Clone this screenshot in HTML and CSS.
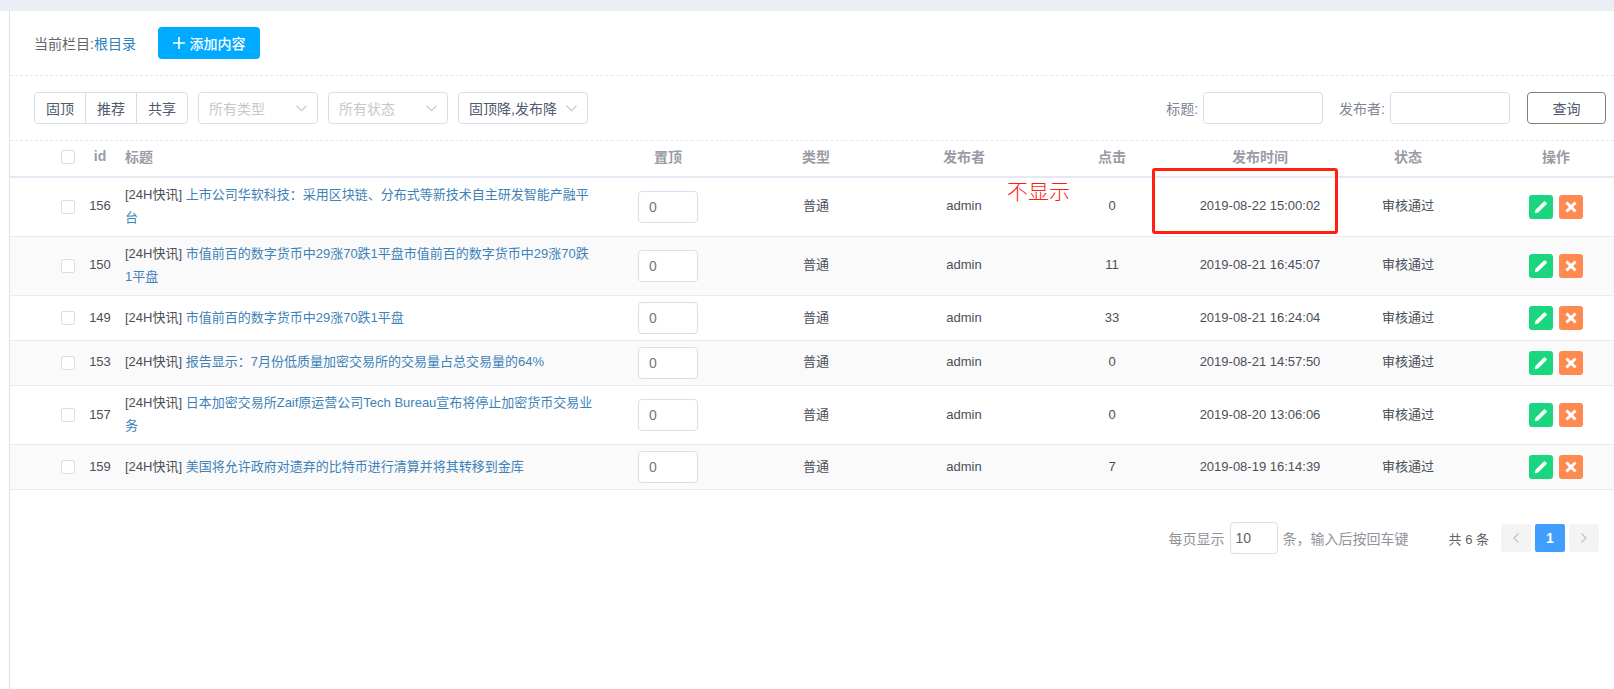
FILE: index.html
```html
<!DOCTYPE html>
<html lang="zh-CN">
<head>
<meta charset="utf-8">
<title>内容管理</title>
<link rel="stylesheet" href="styles.css">
</head>
<body>
<div class="topband"></div>
<div class="layout">
  <aside class="sidebar"></aside>
  <main class="main">
    <section class="bar bar-top">
      <span class="crumb">当前栏目:<a class="crumb-link">根目录</a></span>
      <button class="add-btn"><svg class="plus" viewBox="0 0 14 14"><path d="M7 1v12M1 7h12"/></svg>添加内容</button>
    </section>
    <section class="bar bar-filter">
      <div class="group">
        <button class="group-btn">固顶</button><button class="group-btn">推荐</button><button class="group-btn">共享</button>
      </div>
      <div class="select"><span class="ph">所有类型</span><svg class="chev" viewBox="0 0 10 6"><path d="M.5.5 5 5 9.5.5"/></svg></div>
      <div class="select"><span class="ph">所有状态</span><svg class="chev" viewBox="0 0 10 6"><path d="M.5.5 5 5 9.5.5"/></svg></div>
      <div class="select select-sort"><span>固顶降,发布降</span><svg class="chev" viewBox="0 0 10 6"><path d="M.5.5 5 5 9.5.5"/></svg></div>
      <div class="search">
        <label class="lbl">标题:</label><input class="field" type="text">
        <label class="lbl lbl-2">发布者:</label><input class="field" type="text">
        <button class="query">查询</button>
      </div>
    </section>
    <table class="grid">
      <colgroup>
        <col class="c-check"><col class="c-id"><col class="c-title">
        <col class="c-n"><col class="c-n"><col class="c-n"><col class="c-n"><col class="c-n"><col class="c-n"><col>
      </colgroup>
      <thead>
        <tr>
          <th class="cell-check"><span class="check"></span></th><th>id</th><th class="cell-title">标题</th>
          <th>置顶</th><th>类型</th><th>发布者</th><th>点击</th><th>发布时间</th><th>状态</th><th class="cell-ops">操作</th>
        </tr>
      </thead>
      <tbody>
        <tr class="tall">
          <td class="cell-check"><span class="check"></span></td><td>156</td>
          <td class="cell-title">[24H快讯] <a class="link">上市公司华软科技：采用区块链、分布式等新技术自主研发智能产融平台</a></td>
          <td class="cell-order"><input class="order" type="text" value="0"></td><td>普通</td><td>admin</td><td>0</td><td>2019-08-22 15:00:02</td><td>审核通过</td>
          <td class="cell-ops"><div class="ops"><button class="op op-edit"><svg viewBox="0 0 14 14"><path d="M1.5 12.500l.7-3L9.400 2.300a1 1 0 0 1 1.400 0l1 1a1 1 0 0 1 0 1.400L4.500 11.900z"/></svg></button><button class="op op-del"><svg viewBox="0 0 14 14"><path d="M3 3l8 8M11 3l-8 8"/></svg></button></div></td>
        </tr>
        <tr class="tall">
          <td class="cell-check"><span class="check"></span></td><td>150</td>
          <td class="cell-title">[24H快讯] <a class="link">市值前百的数字货币中29涨70跌1平盘市值前百的数字货币中29涨70跌1平盘</a></td>
          <td class="cell-order"><input class="order" type="text" value="0"></td><td>普通</td><td>admin</td><td>11</td><td>2019-08-21 16:45:07</td><td>审核通过</td>
          <td class="cell-ops"><div class="ops"><button class="op op-edit"><svg viewBox="0 0 14 14"><path d="M1.5 12.500l.7-3L9.400 2.300a1 1 0 0 1 1.400 0l1 1a1 1 0 0 1 0 1.400L4.500 11.900z"/></svg></button><button class="op op-del"><svg viewBox="0 0 14 14"><path d="M3 3l8 8M11 3l-8 8"/></svg></button></div></td>
        </tr>
        <tr class="short">
          <td class="cell-check"><span class="check"></span></td><td>149</td>
          <td class="cell-title">[24H快讯] <a class="link">市值前百的数字货币中29涨70跌1平盘</a></td>
          <td class="cell-order"><input class="order" type="text" value="0"></td><td>普通</td><td>admin</td><td>33</td><td>2019-08-21 16:24:04</td><td>审核通过</td>
          <td class="cell-ops"><div class="ops"><button class="op op-edit"><svg viewBox="0 0 14 14"><path d="M1.5 12.500l.7-3L9.400 2.300a1 1 0 0 1 1.400 0l1 1a1 1 0 0 1 0 1.400L4.500 11.900z"/></svg></button><button class="op op-del"><svg viewBox="0 0 14 14"><path d="M3 3l8 8M11 3l-8 8"/></svg></button></div></td>
        </tr>
        <tr class="short">
          <td class="cell-check"><span class="check"></span></td><td>153</td>
          <td class="cell-title">[24H快讯] <a class="link">报告显示：7月份低质量加密交易所的交易量占总交易量的64%</a></td>
          <td class="cell-order"><input class="order" type="text" value="0"></td><td>普通</td><td>admin</td><td>0</td><td>2019-08-21 14:57:50</td><td>审核通过</td>
          <td class="cell-ops"><div class="ops"><button class="op op-edit"><svg viewBox="0 0 14 14"><path d="M1.5 12.500l.7-3L9.400 2.300a1 1 0 0 1 1.400 0l1 1a1 1 0 0 1 0 1.400L4.500 11.900z"/></svg></button><button class="op op-del"><svg viewBox="0 0 14 14"><path d="M3 3l8 8M11 3l-8 8"/></svg></button></div></td>
        </tr>
        <tr class="tall">
          <td class="cell-check"><span class="check"></span></td><td>157</td>
          <td class="cell-title">[24H快讯] <a class="link">日本加密交易所Zaif原运营公司Tech Bureau宣布将停止加密货币交易业务</a></td>
          <td class="cell-order"><input class="order" type="text" value="0"></td><td>普通</td><td>admin</td><td>0</td><td>2019-08-20 13:06:06</td><td>审核通过</td>
          <td class="cell-ops"><div class="ops"><button class="op op-edit"><svg viewBox="0 0 14 14"><path d="M1.5 12.500l.7-3L9.400 2.300a1 1 0 0 1 1.400 0l1 1a1 1 0 0 1 0 1.400L4.500 11.900z"/></svg></button><button class="op op-del"><svg viewBox="0 0 14 14"><path d="M3 3l8 8M11 3l-8 8"/></svg></button></div></td>
        </tr>
        <tr class="short">
          <td class="cell-check"><span class="check"></span></td><td>159</td>
          <td class="cell-title">[24H快讯] <a class="link">美国将允许政府对遗弃的比特币进行清算并将其转移到金库</a></td>
          <td class="cell-order"><input class="order" type="text" value="0"></td><td>普通</td><td>admin</td><td>7</td><td>2019-08-19 16:14:39</td><td>审核通过</td>
          <td class="cell-ops"><div class="ops"><button class="op op-edit"><svg viewBox="0 0 14 14"><path d="M1.5 12.500l.7-3L9.400 2.300a1 1 0 0 1 1.400 0l1 1a1 1 0 0 1 0 1.400L4.500 11.900z"/></svg></button><button class="op op-del"><svg viewBox="0 0 14 14"><path d="M3 3l8 8M11 3l-8 8"/></svg></button></div></td>
        </tr>
      </tbody>
    </table>
    <nav class="pager">
      <span class="pg-text">每页显示</span>
      <input class="pg-size" type="text" value="10">
      <span class="pg-text">条，输入后按回车键</span>
      <span class="pg-total">共 6 条</span>
      <button class="pg-btn"><svg viewBox="0 0 8 12"><path d="M6.500 1.500 2 6l4.500 4.500"/></svg></button>
      <button class="pg-btn pg-active">1</button>
      <button class="pg-btn"><svg viewBox="0 0 8 12"><path d="M1.500 1.500 6 6l-4.500 4.500"/></svg></button>
    </nav>
    <div class="note-box"></div>
    <div class="note-text">不显示</div>
  </main>
</div>
</body>
</html>
```
FILE: styles.css
```css
* { box-sizing: border-box; }
html, body { margin: 0; padding: 0; height: 100%; background: #fff; overflow: hidden; }
body { font-family: "Liberation Sans", "Noto Sans CJK SC", sans-serif; font-size: 13px; color: #515a6e; }
button, input { font-family: inherit; }

.topband { height: 11px; background: #ebeef4; }
.layout { display: flex; height: 678px; }
.sidebar { width: 10px; flex: none; border-right: 1px solid #dbe1e8; }
.main { flex: 1; position: relative; min-width: 0; }

.bar { display: flex; align-items: center; padding: 16px 8px 16px 24px; border-bottom: 1px dashed #e6e8ee; }
.bar-top { height: 65px; }
.bar-filter { height: 65px; }

.crumb { font-size: 14px; color: #666; }
.crumb-link { color: #2d7fbd; }
.add-btn {
  display: flex; align-items: center; justify-content: center;
  margin-left: 22px; width: 102px; height: 32px; padding: 0;
  background: #00aaff; border: 0; border-radius: 4px;
  color: #fff; font-size: 14px; font-weight: 500;
}
.plus { width: 14px; height: 14px; margin-right: 3px; fill: none; stroke: #fff; stroke-width: 1.6; }

.group { display: flex; width: 154px; height: 32px; border: 1px solid #dcdee6; border-radius: 4px; }
.group-btn {
  flex: 1; padding: 0; background: #fff; border: 0; border-right: 1px solid #dcdee6;
  color: #515a6e; font-size: 14px; border-radius: 4px 0 0 4px;
}
.group-btn:last-child { border-right: 0; border-radius: 0 4px 4px 0; }
.group-btn:nth-child(2) { border-radius: 0; }

.select {
  display: flex; align-items: center; justify-content: space-between;
  width: 120px; height: 32px; margin-left: 10px; padding: 0 10px 0 10px;
  border: 1px solid #dcdee6; border-radius: 4px; font-size: 14px; color: #515a6e; background: #fff;
}
.select-sort { width: 130px; padding-right: 10px; }
.ph { color: #c5c8ce; }
.chev { width: 11px; height: 7px; fill: none; stroke: #c5c8ce; stroke-width: 1; }

.search { display: flex; align-items: center; margin-left: auto; }
.lbl { font-size: 14px; color: #808695; margin-right: 5px; }
.lbl-2 { margin-left: 16px; }
.field { width: 120px; height: 32px; border: 1px solid #dcdee6; border-radius: 4px; background: #fff; outline: 0; }
.query {
  width: 79px; height: 32px; margin-left: 17px; padding: 0;
  background: #fff; border: 1px solid #808080; border-radius: 4px; color: #515a6e; font-size: 14px;
}

.grid { width: 1604px; table-layout: fixed; border-collapse: collapse; }
.c-check { width: 71px; }
.c-id { width: 38px; }
.c-title { width: 475px; }
.c-n { width: 148px; }
.grid th {
  height: 36px; padding: 0 0 5px; font-size: 14px; font-weight: 700; color: #9a9ca5; text-align: center;
  border-bottom: 2px solid #e6e8f3;
}
.grid td {
  padding: 0 0 2px; text-align: center; font-size: 13px; color: #4a4f5a; line-height: 23px;
  border-bottom: 1px solid #e9ebf1;
}
.grid tbody tr:nth-child(even) { background: #fafafa; }
.tall { height: 59.3px; }
.short { height: 44.9px; }
.grid .cell-check { padding: 0 0 0 51px; text-align: left; }
.grid .cell-title { padding-left: 6px; text-align: left; }
.grid .cell-order { padding-bottom: 0; }
.grid .cell-ops { padding: 0 0 0 16px; }
.grid thead .cell-ops { padding-bottom: 5px; }
.grid thead .cell-check { padding-bottom: 4px; }
.check {
  display: block; width: 14px; height: 14px; background: #fff;
  border: 1px solid #dcdee2; border-radius: 2px;
}
.link { color: #3d82b8; }
.order {
  display: block; width: 60px; height: 32px; margin: 0 auto; padding: 0 10px;
  border: 1px solid #dcdee6; border-radius: 4px; background: #fff; outline: 0;
  color: #777; font-size: 14px;
}
.ops { display: flex; justify-content: center; gap: 6px; }
.op {
  display: flex; align-items: center; justify-content: center;
  width: 24px; height: 24px; padding: 0; border: 0; border-radius: 3px;
}
.op svg { width: 16px; height: 16px; }
.op-edit { background: #19d67f; }
.op-edit svg { fill: #fff; }
.op-del { background: #ff8a50; }
.op-del svg { fill: none; stroke: #fff; stroke-width: 2.6; }

.pager { display: flex; align-items: center; height: 32px; margin-top: 32px; padding-right: 15px; justify-content: flex-end; }
.pg-text { font-size: 14px; color: #909399; }
.pg-size {
  width: 48px; height: 32px; margin: 0 5px; padding: 0 5px;
  border: 1px solid #dcdfe6; border-radius: 4px; background: #fff; outline: 0; color: #606266; font-size: 14px;
}
.pg-total { margin: 0 12px 0 40px; font-size: 13px; color: #606266; }
.pg-btn {
  display: flex; align-items: center; justify-content: center;
  width: 30px; height: 28px; margin-left: 4px; padding: 0;
  background: #f4f4f5; border: 0; border-radius: 2px; color: #fff; font-size: 14px; font-weight: 700;
}
.pg-btn:nth-of-type(1) { margin-left: 0; }
.pg-btn svg { width: 8px; height: 12px; fill: none; stroke: #c0c4cc; stroke-width: 1.3; }
.pg-active { background: #409eff; }

.note-box { position: absolute; left: 1142px; top: 157px; width: 186px; height: 66px; border: 3px solid #ff2010; border-radius: 3px; }
.note-text { position: absolute; left: 997px; top: 166px; font-size: 21px; line-height: 30px; color: #ff2010; font-weight: 300; }
```
